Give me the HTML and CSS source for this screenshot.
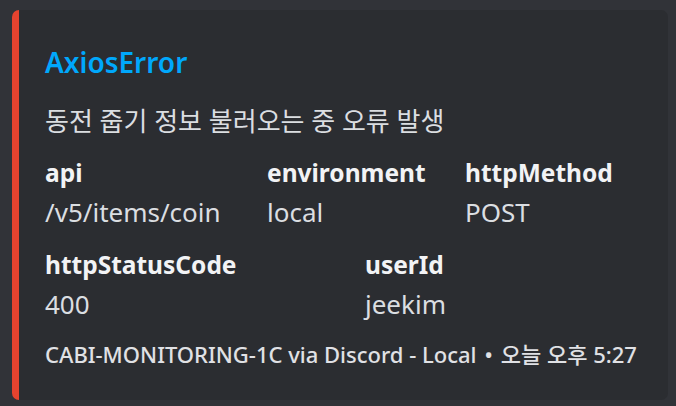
FILE: index.html
```html
<!DOCTYPE html>
<html lang="ko">
<head>
<meta charset="utf-8">
<link rel="stylesheet" href="styles.css">
</head>
<body>
<div class="wrap">
  <article class="embed">
    <div class="content">
      <div class="title">AxiosError</div>
      <div class="desc">동전 줍기 정보 불러오는 중 오류 발생</div>
      <div class="fields">
        <div class="row row-3">
          <div class="field"><div class="name">api</div><div class="value">/v5/items/coin</div></div>
          <div class="field"><div class="name">environment</div><div class="value">local</div></div>
          <div class="field"><div class="name">httpMethod</div><div class="value">POST</div></div>
        </div>
        <div class="row row-2">
          <div class="field"><div class="name">httpStatusCode</div><div class="value">400</div></div>
          <div class="field"><div class="name">userId</div><div class="value">jeekim</div></div>
        </div>
      </div>
      <div class="footer">CABI-MONITORING-1C via Discord - Local<span class="sep">•</span>오늘 오후 5:27</div>
    </div>
  </article>
</div>
</body>
</html>
```
FILE: styles.css
```css
* { box-sizing: border-box; }
html, body { margin: 0; padding: 0; }
body {
  background: #313338;
  font-family: "Noto Sans", "Noto Sans CJK KR", sans-serif;
  width: 676px;
  height: 406px;
  overflow: hidden;
}
.wrap {
  padding: 10px 8px 6px 12px;
}
.embed {
  background: #2b2d31;
  border-left: 7px solid #e5432f;
  border-radius: 7px;
  height: 390px;
}
.content {
  padding: 34px 20px 32px 26px;
}
.title {
  color: #00a8fc;
  font-size: 28px;
  font-weight: 600;
  line-height: 36px;
}
.desc {
  margin-top: 25px;
  color: #dbdee1;
  font-size: 26px;
  line-height: 32px;
}
.fields {
  margin-top: 20px;
  display: flex;
  flex-direction: column;
  gap: 21px;
}
.row { display: grid; }
.row-3 { grid-template-columns: 222px 198px auto; }
.row-2 { grid-template-columns: 320px auto; }
.name {
  color: #f2f3f5;
  font-size: 24.5px;
  font-weight: 700;
  line-height: 32px;
  margin-bottom: 7px;
}
.value {
  color: #dbdee1;
  font-size: 26px;
  line-height: 32px;
}
.footer {
  margin-top: 20px;
  color: #e0e1e5;
  font-size: 22px;
  font-weight: 500;
  line-height: 28px;
  white-space: nowrap;
}
.sep { margin: 0 8px; }
```
